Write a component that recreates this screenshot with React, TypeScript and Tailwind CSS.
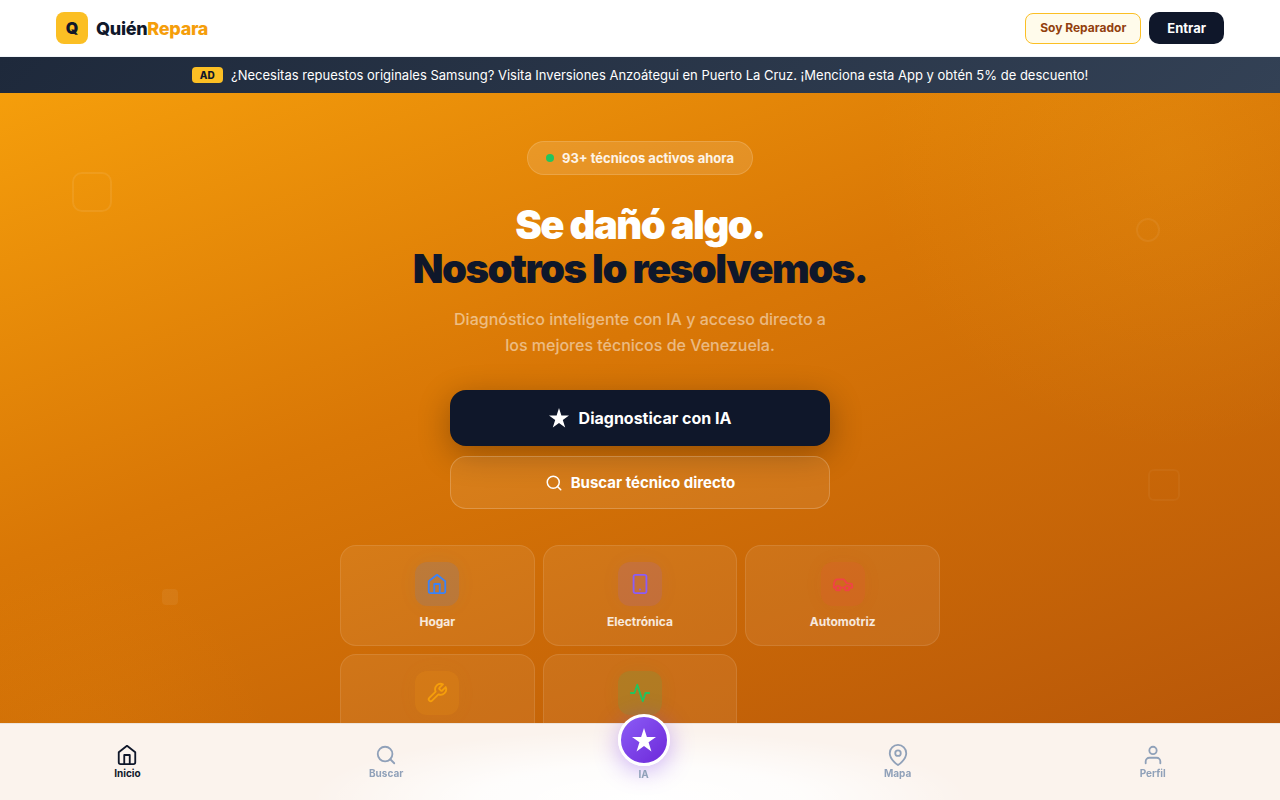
import React, { FC, ReactNode } from "react";

type IconProps = { size: number; strokeWidth?: number; className?: string };

const Icon: FC<IconProps & { children: ReactNode }> = ({
	size,
	strokeWidth = 2,
	className,
	children,
}) => (
	<svg
		width={size}
		height={size}
		viewBox="0 0 24 24"
		fill="none"
		stroke="currentColor"
		strokeWidth={strokeWidth}
		strokeLinecap="round"
		strokeLinejoin="round"
		className={className}
		aria-hidden="true"
	>
		{children}
	</svg>
);

const HomeIcon: FC<IconProps> = (props) => (
	<Icon {...props}>
		<path d="M3 9l9-7 9 7v11a2 2 0 0 1-2 2H5a2 2 0 0 1-2-2z" />
		<path d="M9 22V12h6v10" />
	</Icon>
);

const TabletIcon: FC<IconProps> = (props) => (
	<Icon {...props}>
		<rect x="5" y="2" width="14" height="20" rx="2" />
		<path d="M12 18h.01" />
	</Icon>
);

const CarIcon: FC<IconProps> = (props) => (
	<Icon {...props}>
		<path d="M14 16H9m10 0h3v-3.15a1 1 0 0 0-.84-.99L16 11l-2.7-3.6a1 1 0 0 0-.8-.4H5.24a2 2 0 0 0-1.8 1.1l-.8 1.63A6 6 0 0 0 2 12.42V16h2" />
		<circle cx="6.5" cy="16.5" r="2.5" />
		<circle cx="16.5" cy="16.5" r="2.5" />
	</Icon>
);

const WrenchIcon: FC<IconProps> = (props) => (
	<Icon {...props}>
		<path d="M14.7 6.3a1 1 0 0 0 0 1.4l1.6 1.6a1 1 0 0 0 1.4 0l3.77-3.77a6 6 0 0 1-7.94 7.94l-6.91 6.91a2.12 2.12 0 0 1-3-3l6.91-6.91a6 6 0 0 1 7.94-7.94l-3.76 3.76z" />
	</Icon>
);

const PulseIcon: FC<IconProps> = (props) => (
	<Icon {...props}>
		<path d="M22 12h-4l-3 9L9 3l-3 9H2" />
	</Icon>
);

const SearchIcon: FC<IconProps> = (props) => (
	<Icon {...props}>
		<circle cx="11" cy="11" r="8" />
		<path d="M21 21l-4.35-4.35" />
	</Icon>
);

const PinIcon: FC<IconProps> = (props) => (
	<Icon {...props}>
		<path d="M21 10c0 7-9 13-9 13s-9-6-9-13a9 9 0 0 1 18 0z" />
		<circle cx="12" cy="10" r="3" />
	</Icon>
);

const UserIcon: FC<IconProps> = (props) => (
	<Icon {...props}>
		<path d="M20 21v-2a4 4 0 0 0-4-4H8a4 4 0 0 0-4 4v2" />
		<circle cx="12" cy="7" r="4" />
	</Icon>
);

const StarIcon: FC<{ size: number }> = ({ size }) => (
	<svg width={size} height={size} viewBox="0 0 20 20" fill="currentColor" aria-hidden="true">
		<path d="M10 0l2.4 7.4H20l-6.2 4.5 2.4 7.6L10 15l-6.2 4.5 2.4-7.6L0 7.4h7.6z" />
	</svg>
);

const categories = [
	{
		name: "Hogar",
		icon: HomeIcon,
		style: "text-[#3b82f6] bg-[#3b82f6]/15 shadow-[0_0_20px_#3b82f60d]",
	},
	{
		name: "Electrónica",
		icon: TabletIcon,
		style: "text-[#8b5cf6] bg-[#8b5cf6]/15 shadow-[0_0_20px_#8b5cf60d]",
	},
	{
		name: "Automotriz",
		icon: CarIcon,
		style: "text-[#ef4444] bg-[#ef4444]/15 shadow-[0_0_20px_#ef44440d]",
	},
	{
		name: "Servicios",
		icon: WrenchIcon,
		style: "text-[#f59e0b] bg-[#f59e0b]/15 shadow-[0_0_20px_#f59e0b0d]",
	},
	{
		name: "Salud",
		icon: PulseIcon,
		style: "text-[#22c55e] bg-[#22c55e]/15 shadow-[0_0_20px_#22c55e0d]",
	},
];

const Header: FC = () => {
	return (
		<header className="bg-white border-b border-slate-100">
			<div className="max-w-[1200px] mx-auto px-4 h-14 flex items-center justify-between">
				<a href="#" className="flex items-center gap-2">
					<span className="w-8 h-8 rounded-[8px] bg-[#fbbf24] flex items-center justify-center text-[16px] font-black">
						Q
					</span>
					<span className="text-[18px] font-extrabold tracking-[-0.3px]">
						Quién<span className="text-[#f59e0b]">Repara</span>
					</span>
				</a>
				<div className="flex items-center gap-2">
					<button className="h-[31px] px-3.5 rounded-[8px] border border-[#fbbf24] bg-[#fffbeb] text-[#92400e] text-[12px] leading-5 font-bold">
						Soy Reparador
					</button>
					<button className="h-8 px-[18px] rounded-[10px] bg-[#0f172a] text-white text-[13px] leading-4 font-bold">
						Entrar
					</button>
				</div>
			</div>
		</header>
	);
};

const AdBar: FC = () => {
	return (
		<div className="h-9 px-4 flex items-center justify-center gap-2 bg-[linear-gradient(135deg,#1e293b,#334155)] text-white text-[13px] leading-5">
			<span className="h-4 px-2 rounded-[4px] bg-[#fbbf24] text-[#0f172a] text-[10px] leading-4 font-extrabold tracking-wide">
				AD
			</span>
			<span>
				¿Necesitas repuestos originales Samsung? Visita Inversiones Anzoátegui en
				Puerto La Cruz. ¡Menciona esta App y obtén 5% de descuento!
			</span>
		</div>
	);
};

const Hero: FC = () => {
	return (
		<section className="relative overflow-hidden px-4 py-12 bg-[linear-gradient(160deg,#f59e0b_0%,#d97706_40%,#b45309_100%)]">
			{/* glows and floating shapes */}
			<div className="absolute -top-[240px] -right-[190px] w-[600px] h-[600px] rounded-full bg-[radial-gradient(circle,#fbbf2426,transparent_70%)]" />
			<div className="absolute -bottom-[150px] -left-[120px] w-[400px] h-[400px] rounded-full bg-[radial-gradient(circle,#f59e0b1a,transparent_70%)]" />
			<div className="absolute top-[79px] left-[72px] w-10 h-10 rounded-[10px] border-2 border-white/8" />
			<div className="absolute top-[125px] right-[120px] w-6 h-6 rounded-full border-2 border-white/6" />
			<div className="absolute top-[376px] right-[100px] w-8 h-8 rounded-[6px] border-2 border-white/4" />
			<div className="absolute top-[496px] left-[162px] w-4 h-4 rounded-[4px] bg-white/6" />

			<div className="relative flex flex-col items-center text-center">
				<div className="h-[34px] px-[18px] flex items-center gap-2 rounded-full border border-white/15 bg-white/12 text-white/90 text-[13px] leading-5 font-bold">
					<span className="w-2 h-2 rounded-full bg-[#22c55e]" />
					93+ técnicos activos ahora
				</div>
				<h1 className="mt-7 text-[40px] leading-[44px] font-black tracking-[-1.5px] text-white">
					<span className="block">Se dañó algo.</span>
					<span className="block text-[#0f172a]">Nosotros lo resolvemos.</span>
				</h1>
				<p className="mt-[15px] max-w-[380px] text-[16px] leading-[26px] font-medium text-white/50">
					Diagnóstico inteligente con IA y acceso directo a los mejores técnicos de
					Venezuela.
				</p>
				<div className="mt-8 w-full max-w-[380px] flex flex-col gap-2.5">
					<button className="h-14 flex items-center justify-center gap-2.5 rounded-[16px] bg-[#0f172a] text-white text-[16px] font-bold shadow-[0_8px_32px_#0000004d]">
						<StarIcon size={20} />
						Diagnosticar con IA
					</button>
					<button className="h-[53px] flex items-center justify-center gap-2 rounded-[16px] border border-white/20 bg-white/8 text-white text-[15px] leading-5 font-bold">
						<SearchIcon size={18} />
						Buscar técnico directo
					</button>
				</div>
				<div className="mt-9 w-full max-w-[600px] grid grid-cols-3 gap-2">
					{categories.map(({ name, icon: CategoryIcon, style }) => (
						<button
							key={name}
							className="p-4 flex flex-col items-center gap-2 rounded-[16px] border border-white/10 bg-white/7 text-white/85"
						>
							<span
								className={`w-11 h-11 rounded-[12px] flex items-center justify-center ${style}`}
							>
								<CategoryIcon size={22} />
							</span>
							<span className="text-[12px] leading-[15px] font-bold">{name}</span>
						</button>
					))}
				</div>
			</div>
		</section>
	);
};

const BottomNav: FC = () => {
	const item = "flex flex-col items-center gap-px";
	return (
		<nav className="fixed bottom-0 inset-x-0 z-50 h-[77px] pb-0.5 flex items-center justify-around border-t border-[#ede4dc] bg-[#fbf3ed] bg-[radial-gradient(330px_70px_at_50%_100%,#ffffff_0%,#ffffffcc_50%,#ffffff00_100%)] text-slate-400 text-[10px] leading-3 font-bold">
			<a href="#" className={`${item} text-[#0f172a]`}>
				<HomeIcon size={22} />
				Inicio
			</a>
			<a href="#buscar" className={item}>
				<SearchIcon size={22} />
				Buscar
			</a>
			<a href="#ia" className="w-6 flex flex-col items-center gap-0.5">
				<span className="-mt-7 w-[52px] h-[52px] shrink-0 rounded-full border-[3px] border-white bg-[linear-gradient(135deg,#8b5cf6,#6d28d9)] text-white flex items-center justify-center shadow-[0_4px_24px_#7c3aed66]">
					<StarIcon size={24} />
				</span>
				IA
			</a>
			<a href="#mapa" className={item}>
				<PinIcon size={22} />
				Mapa
			</a>
			<a href="#perfil" className={item}>
				<UserIcon size={22} />
				Perfil
			</a>
		</nav>
	);
};

export default function App() {
	return (
		<div className="min-h-screen pb-20 bg-slate-50 font-['Inter',sans-serif] text-[#0f172a]">
			<Header />
			<AdBar />
			<Hero />
			<BottomNav />
		</div>
	);
}
